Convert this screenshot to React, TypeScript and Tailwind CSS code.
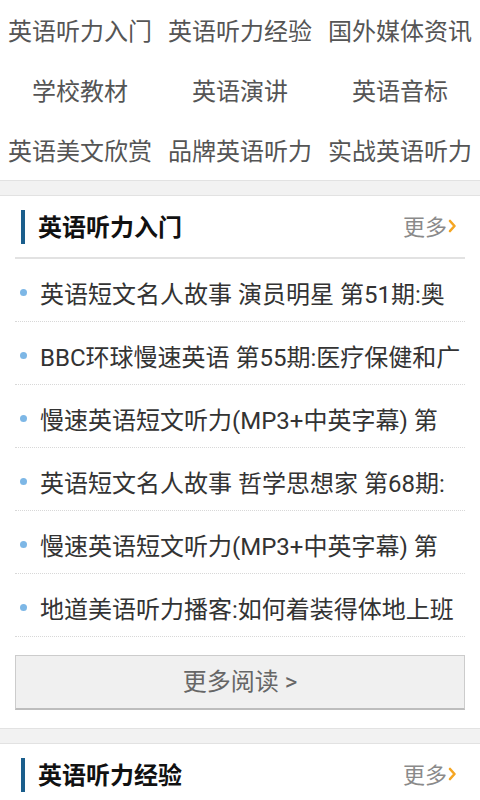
import React from "react";

const nav = [
  "英语听力入门",
  "英语听力经验",
  "国外媒体资讯",
  "学校教材",
  "英语演讲",
  "英语音标",
  "英语美文欣赏",
  "品牌英语听力",
  "实战英语听力",
];

const items = [
  "英语短文名人故事 演员明星 第51期:奥",
  "BBC环球慢速英语 第55期:医疗保健和广",
  "慢速英语短文听力(MP3+中英字幕) 第",
  "英语短文名人故事 哲学思想家 第68期:",
  "慢速英语短文听力(MP3+中英字幕) 第",
  "地道美语听力播客:如何着装得体地上班",
];

const font = { fontFamily: 'Roboto, "Noto Sans CJK SC", sans-serif' };

function Band() {
  return <div className="h-[16px] bg-[#f2f2f2] border-t border-b border-[#e2e2e2]" />;
}

function Header({ title }: { title: string }) {
  return (
    <div className="mx-[15px] h-[63px] flex items-center border-b-2 border-[#e2e2e2]">
      <div className="w-[4px] h-[34px] bg-[#1b5e8c] ml-[6px] mt-[1px]" />
      <div className="ml-[13px] text-[24px] font-bold text-[#111] leading-none mt-[3px]">{title}</div>
      <div className="ml-auto mr-[8px] flex items-center mt-[3px]">
        <span className="text-[22px] text-[#8a8a8a] leading-none">更多</span>
        <svg width="9" height="14" viewBox="0 0 9 14" className="ml-[1px] mb-[4px]">
          <path d="M2 2 L6.5 7 L2 12" stroke="#f5a623" strokeWidth="2.6" fill="none" strokeLinecap="round" strokeLinejoin="round" />
        </svg>
      </div>
    </div>
  );
}

export default function App() {
  return (
    <div className="w-[480px] h-[800px] overflow-hidden bg-white" style={font}>
      <div className="grid grid-cols-3">
        {nav.map((n) => (
          <div key={n} className="h-[60px] pt-[4px] flex items-center justify-center text-[24px] text-[#555] whitespace-nowrap">
            {n}
          </div>
        ))}
      </div>
      <Band />
      <Header title="英语听力入门" />
      <div className="mx-[15px]">
        {items.map((t, i) => (
          <div key={i} className="h-[63px] border-b border-dotted border-[#d8d8d8] flex items-start pt-[23px] overflow-hidden">
            <div className="w-[7px] h-[7px] rounded-full bg-[#7db7e6] ml-[5px] mt-[7px] shrink-0" />
            <div className="ml-[13px] text-[24px] leading-[26px] text-[#333] whitespace-nowrap overflow-hidden">{t}</div>
          </div>
        ))}
      </div>
      <div className="mx-[15px] mt-[18px] h-[55px] bg-[#f0f0f0] border border-[#cccccc] border-b-2 border-b-[#bdbdbd] flex items-center justify-center text-[24px] text-[#666]">
        更多阅读 &gt;
      </div>
      <div className="h-[18px]" />
      <Band />
      <Header title="英语听力经验" />
    </div>
  );
}
